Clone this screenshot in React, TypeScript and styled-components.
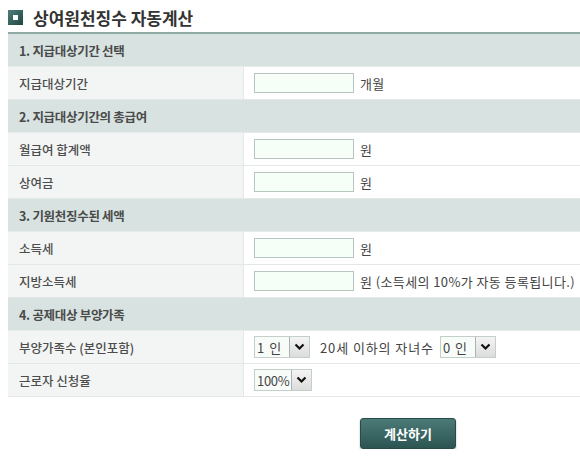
import styled, { createGlobalStyle } from "styled-components"

const GlobalStyle = createGlobalStyle`
    html, body {
        margin: 0;
        padding: 0;
        background: #fff;
    }
    body {
        font-family: "Noto Sans CJK KR", "Noto Sans", sans-serif;
        color: #555;
        font-size: 12.5px;
    }
`

const Page = styled.div`
    padding: 4px 0 0 8px;
    width: 580px;
    box-sizing: border-box;
    overflow: hidden;
`

const Title = styled.h2`
    display: flex;
    align-items: center;
    gap: 10px;
    margin: 0;
    height: 26px;
    font-size: 17px;
    font-weight: 700;
    color: #333;
`

const TitleIcon = styled.span`
    width: 15px;
    height: 15px;
    background: linear-gradient(135deg, #4f7f7a, #1f4643);
    display: flex;
    align-items: center;
    justify-content: center;
    &::after {
        content: "";
        width: 5px;
        height: 5px;
        background: #fff;
    }
`

const Table = styled.table`
    margin-top: 2px;
    width: 580px;
    border-collapse: collapse;
    border-top: 2px solid #8fa9a4;
    border-bottom: 1px solid #c9d3d1;
`

const SectionCell = styled.td`
    height: 32px;
    padding: 0 0 0 11px;
    background: #d8e3e1;
    font-weight: 700;
    color: #4a4a4a;
    border-bottom: 1px solid #e6ecea;
    letter-spacing: -0.3px;
`

const LabelCell = styled.th`
    width: 224px;
    height: 32px;
    padding: 0 0 0 11px;
    text-align: left;
    font-weight: 500;
    background: #f3f5f4;
    color: #4d4d4d;
    border-right: 1px solid #e3e7e6;
    border-bottom: 1px solid #e3e7e6;
`

const ValueCell = styled.td`
    height: 32px;
    padding: 0 0 0 10px;
    border-bottom: 1px solid #e3e7e6;
`

const Field = styled.div`
    display: flex;
    align-items: center;
    gap: 6px;
    color: #444;
    font-size: 13px;
    letter-spacing: 0.4px;
    white-space: nowrap;
`

const Gap = styled.span`
    margin-left: 4px;
    letter-spacing: 0.9px;
`

const TextInput = styled.input`
    width: 100px;
    height: 20px;
    box-sizing: border-box;
    border: 1px solid #b8c6c2;
    background: #f5fff8;
    margin: 0;
    padding: 0 4px;
    font-family: inherit;
    font-size: 12px;
`

const SelectBox = styled.div<{ $width: number }>`
    display: flex;
    align-items: stretch;
    width: ${p => p.$width}px;
    height: 22px;
    box-sizing: border-box;
    border: 1px solid #c4cfcc;
    background: #f8fcf9;
`

const SelectText = styled.span<{ $spacing: number }>`
    flex: 1;
    display: flex;
    align-items: center;
    padding-left: 2px;
    font-size: 13px;
    color: #444;
    letter-spacing: ${p => p.$spacing}px;
    overflow: hidden;
`

const SelectArrow = styled.span`
    width: 19px;
    border-left: 1px solid #a9b4b1;
    background: linear-gradient(#f4f4f4, #dcdcdc);
    display: flex;
    align-items: center;
    justify-content: center;
`

const Footer = styled.div`
    display: flex;
    padding: 21px 0 0 352px;
`

const CalcButton = styled.button`
    width: 96px;
    height: 31px;
    border: 1px solid #2a4a48;
    border-radius: 3px;
    background: linear-gradient(#4b7a76, #2c5552);
    color: #fff;
    font-family: inherit;
    font-size: 13px;
    font-weight: 700;
    box-shadow: 0 1px 2px rgba(0, 0, 0, 0.3);
`

const Arrow = () => (
    <svg width="11" height="8" viewBox="0 0 11 8">
        <path d="M1.5 1.5 L5.5 5.5 L9.5 1.5" fill="none" stroke="#111" strokeWidth="2.2" />
    </svg>
)

const Select = ({ value, width, spacing = 1 }: { value: string; width: number; spacing?: number }) => (
    <SelectBox $width={width}>
        <SelectText $spacing={spacing}>{value}</SelectText>
        <SelectArrow><Arrow /></SelectArrow>
    </SelectBox>
)

const Section = ({ title }: { title: string }) => (
    <tr>
        <SectionCell colSpan={2}>{title}</SectionCell>
    </tr>
)

const InputRow = ({ label, unit }: { label: string; unit: string }) => (
    <tr>
        <LabelCell>{label}</LabelCell>
        <ValueCell>
            <Field>
                <TextInput />
                <span>{unit}</span>
            </Field>
        </ValueCell>
    </tr>
)

const App = () => {
    return (
        <Page>
            <GlobalStyle />
            <Title>
                <TitleIcon />
                상여원천징수 자동계산
            </Title>
            <Table>
                <tbody>
                    <Section title="1. 지급대상기간 선택" />
                    <InputRow label="지급대상기간" unit="개월" />
                    <Section title="2. 지급대상기간의 총급여" />
                    <InputRow label="월급여 합계액" unit="원" />
                    <InputRow label="상여금" unit="원" />
                    <Section title="3. 기원천징수된 세액" />
                    <InputRow label="소득세" unit="원" />
                    <InputRow label="지방소득세" unit="원 (소득세의 10%가 자동 등록됩니다.)" />
                    <Section title="4. 공제대상 부양가족" />
                    <tr>
                        <LabelCell>부양가족수 (본인포함)</LabelCell>
                        <ValueCell>
                            <Field>
                                <Select value="1 인" width={56} />
                                <Gap>20세 이하의 자녀수</Gap>
                                <Select value="0 인" width={56} />
                            </Field>
                        </ValueCell>
                    </tr>
                    <tr>
                        <LabelCell>근로자 신청율</LabelCell>
                        <ValueCell>
                            <Field>
                                <Select value="100%" width={58} spacing={-0.3} />
                            </Field>
                        </ValueCell>
                    </tr>
                </tbody>
            </Table>
            <Footer>
                <CalcButton>계산하기</CalcButton>
            </Footer>
        </Page>
    )
}

export default App
